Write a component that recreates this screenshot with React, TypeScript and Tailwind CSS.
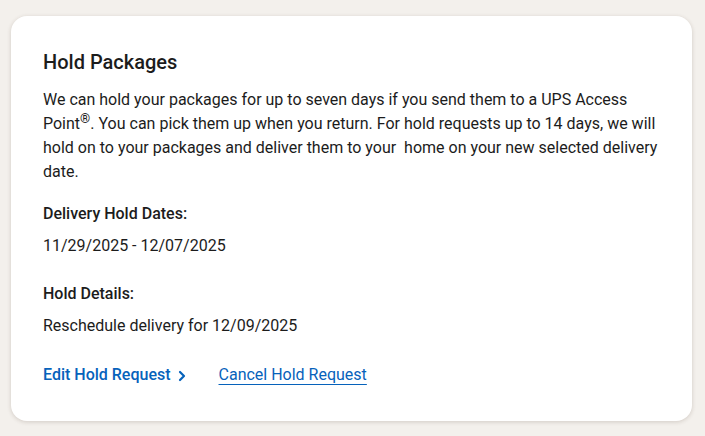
import React from "react";

const HoldPackages: React.FC = () => {
  return (
    <div className="min-h-[436px] bg-[#f3f0ec] pt-4 pl-[11px] pr-[13px] font-['Roboto',sans-serif] text-[#1c1c1c]">
      <div className="w-[681px] rounded-2xl bg-white px-8 pt-8 pb-[34px] shadow-[0_1px_4px_rgba(60,40,20,0.18)]">
        <h2 className="text-[20px] leading-7 font-medium">Hold Packages</h2>
        <p className="mt-3 text-base leading-6">
          We can hold your packages for up to seven days if you send them to a UPS Access Point
          <sup className="text-[13px] leading-none font-medium">®</sup>. You can pick them up when you return. For hold
          requests up to 14 days, we will hold on to your packages and deliver them to your{"\u00a0"} home on your new
          selected delivery date.
        </p>

        <div className="mt-[18px]">
          <p className="text-base leading-6 font-medium">Delivery Hold Dates:</p>
          <p className="mt-2 text-base leading-6">11/29/2025 - 12/07/2025</p>
        </div>

        <div className="mt-6">
          <p className="text-base leading-6 font-medium">Hold Details:</p>
          <p className="mt-2 text-base leading-6">Reschedule delivery for 12/09/2025</p>
        </div>

        <div className="mt-[25px] flex items-center gap-8 text-base leading-6">
          <a href="#" className="flex items-center gap-[6px] font-medium text-[#0662bb]">
            Edit Hold Request
            <svg width="10" height="12" viewBox="0 0 10 12" fill="none" className="mt-[2px]">
              <path d="M3 2l4 4-4 4" stroke="#0662bb" strokeWidth="2.2" strokeLinecap="round" strokeLinejoin="round" />
            </svg>
          </a>
          <a href="#" className="text-[#0662bb] underline underline-offset-[4px] decoration-1">
            Cancel Hold Request
          </a>
        </div>
      </div>
    </div>
  );
};

export default function App() {
  return <HoldPackages />;
}
